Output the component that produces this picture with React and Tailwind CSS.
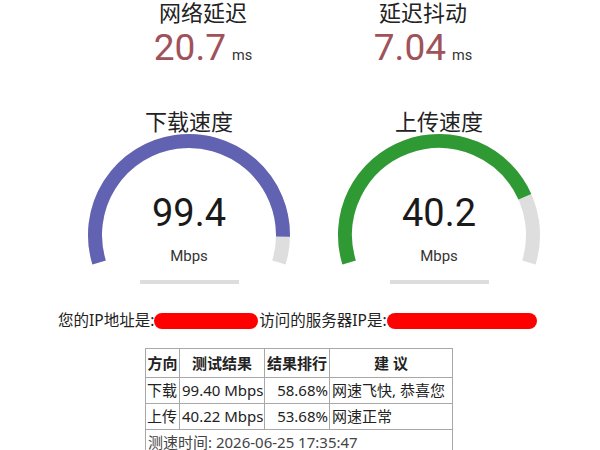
import React from "react";

const CX = 125;
const CY = 102;
const R = 94;

function pt(deg) {
  const a = (deg * Math.PI) / 180;
  return [CX + R * Math.cos(a), CY - R * Math.sin(a)];
}

function arc(from, to) {
  const [x1, y1] = pt(from);
  const [x2, y2] = pt(to);
  const large = from - to > 180 ? 1 : 0;
  return `M ${x1} ${y1} A ${R} ${R} 0 ${large} 1 ${x2} ${y2}`;
}

function Gauge({ title, value, color, end }) {
  return (
    <div className="w-[250px] flex flex-col items-center">
      <div className="text-[22px] leading-none h-[22px] text-[#222]">{title}</div>
      <div className="relative w-[250px] h-[140px] mt-[1px]">
        <svg width="250" height="140" className="block">
          <path d={arc(197, -17)} fill="none" stroke="#dedede" strokeWidth="14" />
          <path d={arc(197, end)} fill="none" stroke={color} strokeWidth="14" />
        </svg>
        <div className="absolute inset-x-0 top-[61px] text-center font-['Roboto'] text-[38px] leading-none text-[#1a1a1a]">
          {value}
        </div>
        <div className="absolute inset-x-0 top-[116px] text-center font-['Roboto'] text-[15px] leading-none text-[#333]">
          Mbps
        </div>
      </div>
      <div className="w-[99px] h-[4px] bg-[#dddddd] mt-[7px]" />
    </div>
  );
}

function Stat({ title, value }) {
  return (
    <div className="w-[220px] flex flex-col items-center">
      <div className="text-[22px] leading-[24px] h-[24px] text-[#222]">{title}</div>
      <div className="flex items-baseline mt-[5px]">
        <span className="font-['Roboto'] text-[37px] leading-none text-[#a0525a]">
          {value}
        </span>
        <span className="font-['Roboto'] text-[14.5px] leading-none text-[#333] ml-[6px]">ms</span>
      </div>
    </div>
  );
}

export default function App() {
  const rows = [
    { dir: "下载", speed: "99.40 Mbps", rank: "58.68%", tip: "网速飞快, 恭喜您" },
    { dir: "上传", speed: "40.22 Mbps", rank: "53.68%", tip: "网速正常" },
  ];

  return (
    <div className="w-[600px] h-[450px] overflow-hidden bg-white font-['Noto_Sans','Noto_Sans_CJK_SC',sans-serif]">
      <div className="flex pl-[93px]">
        <Stat title="网络延迟" value="20.7" />
        <Stat title="延迟抖动" value="7.04" />
      </div>

      <div className="flex pl-[64px] mt-[44px]">
        <Gauge title="下载速度" value="99.4" color="#6262b2" end={-1} />
        <Gauge title="上传速度" value="40.2" color="#2f9a33" end={24} />
      </div>

      <div className="flex items-center h-[22px] mt-[26px] pl-[58px] text-[15.5px] text-[#222]">
        <span>您的IP地址是:</span>
        <span className="w-[104px] h-[16px] rounded-full bg-[#ff0000]" />
        <span className="ml-[1px]">访问的服务器IP是:</span>
        <span className="w-[150px] h-[16px] rounded-full bg-[#ff0000]" />
      </div>

      <table className="ml-[145px] mt-[16px] border-collapse text-[15px] text-[#222] w-[307px] table-fixed">
        <colgroup>
          <col className="w-[34px]" />
          <col className="w-[85px]" />
          <col className="w-[65px]" />
          <col className="w-[123px]" />
        </colgroup>
        <thead>
          <tr className="h-[29px]">
            <th className="border border-[#a8a8a8] font-bold p-0 text-center whitespace-nowrap">方向</th>
            <th className="border border-[#a8a8a8] font-bold p-0 text-center whitespace-nowrap">测试结果</th>
            <th className="border border-[#a8a8a8] font-bold p-0 text-center whitespace-nowrap">结果排行</th>
            <th className="border border-[#a8a8a8] font-bold p-0 text-center whitespace-nowrap">建 议</th>
          </tr>
        </thead>
        <tbody>
          {rows.map((r) => (
            <tr key={r.dir} className="h-[26px]">
              <td className="border border-[#a8a8a8] p-0 pl-[1px] whitespace-nowrap">{r.dir}</td>
              <td className="border border-[#a8a8a8] p-0 pl-[2px] whitespace-nowrap">{r.speed}</td>
              <td className="border border-[#a8a8a8] p-0 pr-[1px] text-right whitespace-nowrap">{r.rank}</td>
              <td className="border border-[#a8a8a8] p-0 pl-[2px] whitespace-nowrap">{r.tip}</td>
            </tr>
          ))}
          <tr className="h-[26px]">
            <td colSpan={4} className="border border-[#a8a8a8] p-0 pl-[2px] text-[#444] whitespace-nowrap">
              测速时间: 2026-06-25 17:35:47
            </td>
          </tr>
        </tbody>
      </table>
    </div>
  );
}
